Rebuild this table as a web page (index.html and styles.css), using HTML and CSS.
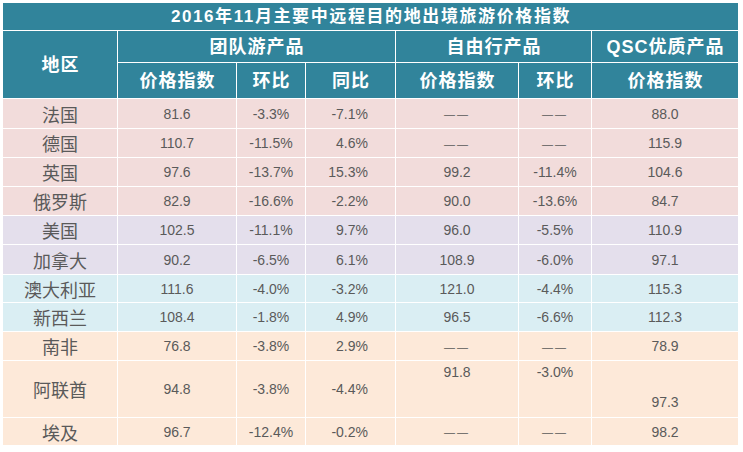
FILE: index.html
```html
<!DOCTYPE html>
<html lang="zh-CN">
<head>
<meta charset="utf-8">
<title>2016年11月主要中远程目的地出境旅游价格指数</title>
<link rel="stylesheet" href="styles.css">
</head>
<body>
<table class="tbl">
  <colgroup>
    <col class="c-region">
    <col class="c-gi">
    <col class="c-gh">
    <col class="c-gt">
    <col class="c-fi">
    <col class="c-fh">
    <col class="c-q">
  </colgroup>
  <thead>
    <tr class="r-title"><th colspan="7" class="title">2016年11月主要中远程目的地出境旅游价格指数</th></tr>
    <tr class="r-grp">
      <th rowspan="2">地区</th>
      <th colspan="3">团队游产品</th>
      <th colspan="2">自由行产品</th>
      <th>QSC优质产品</th>
    </tr>
    <tr class="r-sub">
      <th>价格指数</th>
      <th>环比</th>
      <th>同比</th>
      <th>价格指数</th>
      <th>环比</th>
      <th>价格指数</th>
    </tr>
  </thead>
  <tbody>
    <tr class="pink h30"><td class="reg">法国</td><td>81.6</td><td>-3.3%</td><td class="yoy">-7.1%</td><td><span class="dash">——</span></td><td><span class="dash">——</span></td><td>88.0</td></tr>
    <tr class="pink h29"><td class="reg">德国</td><td>110.7</td><td>-11.5%</td><td class="yoy">4.6%</td><td><span class="dash">——</span></td><td><span class="dash">——</span></td><td>115.9</td></tr>
    <tr class="pink h29"><td class="reg">英国</td><td>97.6</td><td>-13.7%</td><td class="yoy">15.3%</td><td>99.2</td><td>-11.4%</td><td>104.6</td></tr>
    <tr class="pink h29"><td class="reg">俄罗斯</td><td>82.9</td><td>-16.6%</td><td class="yoy">-2.2%</td><td>90.0</td><td>-13.6%</td><td>84.7</td></tr>
    <tr class="lav h29"><td class="reg">美国</td><td>102.5</td><td>-11.1%</td><td class="yoy">9.7%</td><td>96.0</td><td>-5.5%</td><td>110.9</td></tr>
    <tr class="lav h30"><td class="reg">加拿大</td><td>90.2</td><td>-6.5%</td><td class="yoy">6.1%</td><td>108.9</td><td>-6.0%</td><td>97.1</td></tr>
    <tr class="blue h28"><td class="reg">澳大利亚</td><td>111.6</td><td>-4.0%</td><td class="yoy">-3.2%</td><td>121.0</td><td>-4.4%</td><td>115.3</td></tr>
    <tr class="blue h29"><td class="reg">新西兰</td><td>108.4</td><td>-1.8%</td><td class="yoy">4.9%</td><td>96.5</td><td>-6.6%</td><td>112.3</td></tr>
    <tr class="peach h29"><td class="reg">南非</td><td>76.8</td><td>-3.8%</td><td class="yoy">2.9%</td><td><span class="dash">——</span></td><td><span class="dash">——</span></td><td>78.9</td></tr>
    <tr class="peach h57"><td class="reg">阿联酋</td><td>94.8</td><td>-3.8%</td><td class="yoy">-4.4%</td><td class="top">91.8</td><td class="top">-3.0%</td><td class="bottom">97.3</td></tr>
    <tr class="peach h28"><td class="reg">埃及</td><td>96.7</td><td>-12.4%</td><td class="yoy">-0.2%</td><td><span class="dash">——</span></td><td><span class="dash">——</span></td><td>98.2</td></tr>
  </tbody>
</table>
</body>
</html>
```

FILE: styles.css
```css
html, body {
  margin: 0;
  padding: 0;
  background: #ffffff;
}

body {
  padding: 2px 0 0 2px;
}

.tbl {
  border-collapse: collapse;
  table-layout: fixed;
  width: 736px;
  font-family: "Liberation Sans", "Noto Sans CJK SC", sans-serif;
}

.c-region { width: 115px; }
.c-gi { width: 119px; }
.c-gh { width: 69px; }
.c-gt { width: 90px; }
.c-fi { width: 123px; }
.c-fh { width: 73px; }
.c-q { width: 147px; }

.tbl th,
.tbl td {
  border: 1px solid #ffffff;
  padding: 0;
  text-align: center;
  vertical-align: middle;
  overflow: hidden;
  white-space: nowrap;
}

.tbl th {
  background: #31849b;
  color: #ffffff;
  font-family: "Liberation Sans", "Noto Sans CJK SC", sans-serif;
  font-weight: bold;
  font-size: 18px;
  line-height: 20px;
  letter-spacing: 1px;
  text-indent: 1px;
}

.tbl th.title {
  font-size: 17px;
  letter-spacing: 1.6px;
}

.r-title { height: 28px; }
.r-grp { height: 32px; }
.r-sub { height: 36px; }

.h28 { height: 28px; }
.h29 { height: 29px; }
.h30 { height: 30px; }
.h57 { height: 57px; }

.tbl td {
  color: #5a5a5a;
  font-size: 14px;
  line-height: 16px;
}

.tbl td.reg {
  font-family: "Noto Sans CJK SC", sans-serif;
  font-size: 18px;
  line-height: 20px;
}

.tbl td.yoy {
  text-align: right;
  padding-right: 27px;
}

.tbl td.top {
  vertical-align: top;
  padding-top: 3px;
}

.tbl td.bottom {
  vertical-align: bottom;
  padding-bottom: 7px;
}

.dash {
  font-size: 11px;
  letter-spacing: 2px;
  color: #5a5a5a;
}

.pink td { background: #f2dcdb; }
.lav td { background: #e4dfec; }
.blue td { background: #daeef3; }
.peach td { background: #fde9d9; }
```
